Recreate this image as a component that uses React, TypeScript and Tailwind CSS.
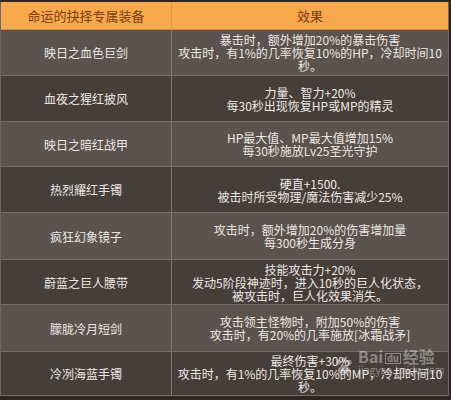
const rows = [
  {
    name: "映日之血色巨剑",
    effect: ["暴击时，额外增加20%的暴击伤害", "攻击时，有1%的几率恢复10%的HP，冷却时间10秒。"],
    h: "h-[46px]",
  },
  {
    name: "血夜之猩红披风",
    effect: ["力量、智力+20%", "每30秒出现恢复HP或MP的精灵"],
    h: "h-[46px]",
  },
  {
    name: "映日之暗红战甲",
    effect: ["HP最大值、MP最大值增加15%", "每30秒施放Lv25圣光守护"],
    h: "h-[45px]",
  },
  {
    name: "热烈耀红手镯",
    effect: ["硬直+1500.", "被击时所受物理/魔法伤害减少25%"],
    h: "h-[46px]",
  },
  {
    name: "疯狂幻象镜子",
    effect: ["攻击时，额外增加20%的伤害增加量", "每300秒生成分身"],
    h: "h-[47px]",
  },
  {
    name: "蔚蓝之巨人腰带",
    effect: ["技能攻击力+20%", "发动5阶段神迹时，进入10秒的巨人化状态，", "被攻击时，巨人化效果消失。"],
    h: "h-[45px]",
  },
  {
    name: "朦胧冷月短剑",
    effect: ["攻击领主怪物时，附加50%的伤害", "攻击时，有20%的几率施放[冰霜战矛]"],
    h: "h-[47px]",
  },
  {
    name: "冷冽海蓝手镯",
    effect: ["最终伤害+30%", "攻击时，有1%的几率恢复10%的MP，冷却时间10秒。"],
    h: "h-[44px]",
  },
];

export default function App() {
  return (
    <div
      className="relative w-[451px] h-[400px] overflow-hidden bg-[#2e2622] pt-[2px]"
      style={{ fontFamily: '"Noto Sans CJK SC", "Noto Sans", sans-serif' }}
    >
      <div className="w-[449px] border-l border-r border-[#6e6560]">
        {/* Header */}
        <div className="grid grid-cols-[171px_1fr] h-[28px] bg-[#f8a94c] border-b border-[#c98a3e] text-[13px] text-[#7c3f17]">
          <div className="flex items-center justify-center border-r border-[#e3994a]">命运的抉择专属装备</div>
          <div className="flex items-center justify-center">效果</div>
        </div>

        {rows.map((row, i) => (
          <div
            key={row.name}
            className={`grid grid-cols-[171px_1fr] ${row.h} border-b border-[#7a716b] text-[12px] leading-[13px] text-[#ece8e2] ${
              i % 2 === 0 ? "bg-[#5b534d]" : "bg-[#463e39]"
            }`}
          >
            <div className="flex items-center justify-center border-r border-[#7f7771]">{row.name}</div>
            <div className="flex flex-col items-center justify-center px-1 text-center">
              {row.effect.map((line) => (
                <span key={line}>{line}</span>
              ))}
            </div>
          </div>
        ))}
      </div>

      {/* Baidu watermark */}
      <div className="absolute left-[334px] top-[348px] flex items-end gap-1 whitespace-nowrap text-white/40 pointer-events-none">
        <svg width="20" height="20" viewBox="0 0 22 20" fill="currentColor">
          <ellipse cx="5" cy="6" rx="2.5" ry="3" />
          <ellipse cx="11" cy="3.5" rx="2.5" ry="3" />
          <ellipse cx="17" cy="6" rx="2.5" ry="3" />
          <path d="M11 9c-4 0-7 4-7 7 0 2 2 3 4 2.5 1.5-.4 4.5-.4 6 0 2 .5 4-.5 4-2.5 0-3-3-7-7-7z" />
        </svg>
        <div className="flex flex-col">
          <div className="flex items-end gap-[2px] leading-none">
            <span className="text-[16px] font-bold">Bai</span>
            <span className="text-[9px] font-bold border border-white/40 px-[1px]">du</span>
            <span className="text-[16px] font-bold">经验</span>
          </div>
          <span className="text-[10px] leading-[12px]">jingyan.baidu.com</span>
        </div>
      </div>
    </div>
  );
}
